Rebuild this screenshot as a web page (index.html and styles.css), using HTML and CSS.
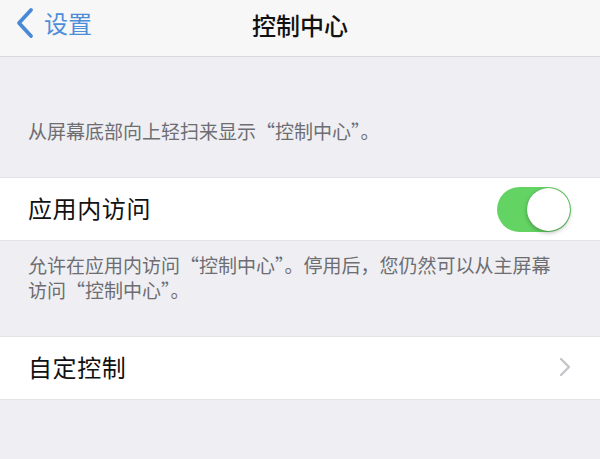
FILE: index.html
```html
<!DOCTYPE html>
<html lang="zh-CN">
<head>
<meta charset="utf-8">
<title>控制中心</title>
<link rel="stylesheet" href="styles.css">
</head>
<body>
<header class="nav">
  <a class="back">
    <svg class="back-icon" width="20" height="32" viewBox="0 0 20 32"><path d="M16 3 L4 16 L16 29" fill="none" stroke="#4a89d6" stroke-width="3.8" stroke-linecap="round" stroke-linejoin="round"/></svg>
    <span class="back-label">设置</span>
  </a>
  <h1 class="title">控制中心</h1>
</header>
<main class="content">
  <p class="note note-top">从屏幕底部向上轻扫来显示“控制中心”。</p>
  <div class="row">
    <span class="label">应用内访问</span>
    <span class="toggle"><span class="knob"></span></span>
  </div>
  <p class="note note-mid">允许在应用内访问“控制中心”。停用后，您仍然可以从主屏幕<br>访问“控制中心”。</p>
  <div class="row">
    <span class="label">自定控制</span>
    <svg class="chevron" width="14" height="20" viewBox="0 0 14 20"><path d="M3 2 L11 10 L3 18" fill="none" stroke="#c5c5ca" stroke-width="2.4" stroke-linecap="round" stroke-linejoin="round"/></svg>
  </div>
</main>
</body>
</html>
```
FILE: styles.css
```css
* { box-sizing: border-box; }
html, body { margin: 0; padding: 0; }
body {
  width: 600px;
  height: 459px;
  overflow: hidden;
  background: #efeff3;
  font-family: "PingFang SC", "Noto Sans CJK SC", "Noto Sans", sans-serif;
  color: #111;
}
.nav {
  height: 57px;
  background: #f7f7f8;
  border-bottom: 1px solid #d9d9dc;
  display: flex;
  align-items: center;
  justify-content: center;
  position: relative;
}
.back {
  position: absolute;
  left: 15px;
  top: 7px;
  display: flex;
  align-items: center;
  gap: 9px;
  color: #4a89d6;
}
.back-icon { display: block; }
.back-label {
  font-size: 24px;
  line-height: 32px;
  color: #4e8ed8;
}
.title {
  margin: 0;
  font-size: 24px;
  font-weight: 500;
  line-height: 32px;
  margin-top: -6px;
  color: #111;
}
.content { display: flex; flex-direction: column; }
.note {
  margin: 0;
  font-size: 19px;
  line-height: 25px;
  color: #6d6d72;
  padding: 0 20px 0 28px;
}
.note-top { padding-top: 61px; padding-bottom: 34px; }
.note-mid { padding-top: 11px; padding-bottom: 34px; }
.row {
  height: 64px;
  background: #fff;
  border-top: 1px solid #e4e4e6;
  border-bottom: 1px solid #e4e4e6;
  display: flex;
  align-items: center;
  justify-content: space-between;
  padding: 0 28px 0 28px;
}
.label {
  font-size: 24px;
  letter-spacing: 0.6px;
  color: #111;
  line-height: 32px;
  margin-top: -2px;
}
.toggle {
  width: 74px;
  height: 45px;
  border-radius: 23px;
  background: #63d363;
  position: relative;
  margin-right: 1px;
}
.knob {
  position: absolute;
  right: 1px;
  top: 1px;
  width: 43px;
  height: 43px;
  border-radius: 50%;
  background: #fff;
  box-shadow: 0 2px 4px rgba(0,0,0,0.25), 0 0 1px rgba(0,0,0,0.3);
}
.chevron { display: block; margin-right: 0; margin-top: -3px; }
```
